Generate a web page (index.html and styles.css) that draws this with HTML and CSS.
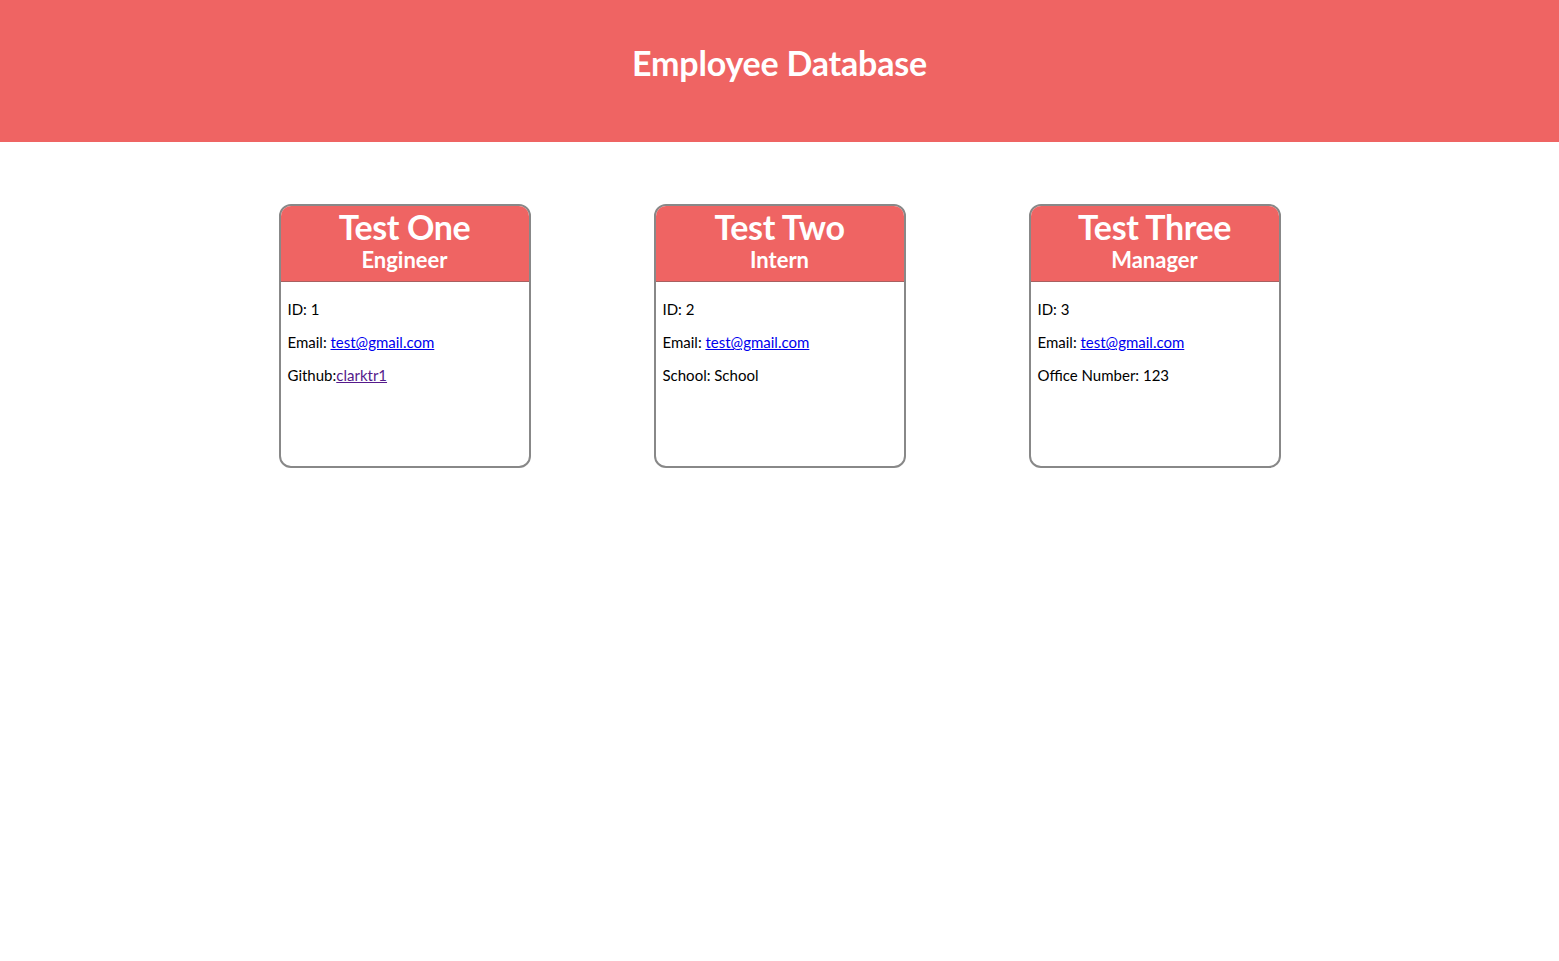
FILE: index.html
```html
<!DOCTYPE html>
<html>
<head>
<meta charset="utf-8">
<title>Employee Database</title>
<link rel="stylesheet" href="styles.css">
</head>
<body>
<header class="banner"><h1 class="banner-title">Employee Database</h1></header>
<main class="cards">
  <div class="card">
    <div class="card-head"><div class="card-name">Test One</div><div class="card-role">Engineer</div></div>
    <div class="card-body">
      <p>ID: 1</p>
      <p>Email: <a href="#">test@gmail.com</a></p>
      <p>Github:<a class="visited" href="#">clarktr1</a></p>
    </div>
  </div>
  <div class="card">
    <div class="card-head"><div class="card-name">Test Two</div><div class="card-role">Intern</div></div>
    <div class="card-body">
      <p>ID: 2</p>
      <p>Email: <a href="#">test@gmail.com</a></p>
      <p>School: School</p>
    </div>
  </div>
  <div class="card">
    <div class="card-head"><div class="card-name">Test Three</div><div class="card-role">Manager</div></div>
    <div class="card-body">
      <p>ID: 3</p>
      <p>Email: <a href="#">test@gmail.com</a></p>
      <p>Office Number: 123</p>
    </div>
  </div>
</main>
</body>
</html>
```
FILE: styles.css
```css
body {
  margin: 0;
  font-family: "Lato", "Open Sans", sans-serif;
  background: #fff;
  color: #000;
}
.banner {
  background: #ef6463;
  height: 142px;
  display: flex;
  justify-content: center;
  align-items: flex-start;
}
.banner-title {
  margin: 42px 0 0;
  color: #fff;
  font-size: 34px;
  font-weight: 700;
  letter-spacing: -0.2px;
}
.cards {
  display: flex;
  justify-content: center;
  gap: 123px;
  padding-top: 62px;
}
.card {
  width: 248px;
  height: 260px;
  border: 2px solid #888;
  border-radius: 12px;
  overflow: hidden;
  display: flex;
  flex-direction: column;
}
.card-head {
  background: #ef6463;
  color: #fff;
  text-align: center;
  height: 75px;
  border-bottom: 1px solid #a86060;
  font-weight: 700;
}
.card-name {
  font-size: 34px;
  line-height: 36px;
  margin-top: 3px;
  letter-spacing: -0.4px;
}
.card-role {
  font-size: 22px;
  line-height: 24px;
  margin-top: 3px;
}
.card-body {
  padding: 6px 7px;
  font-size: 15px;
}
.card-body p {
  margin: 9px 0 0;
  line-height: 24px;
}
.card-body a {
  color: #0000ee;
}
.card-body a.visited {
  color: #551a8b;
}
```
